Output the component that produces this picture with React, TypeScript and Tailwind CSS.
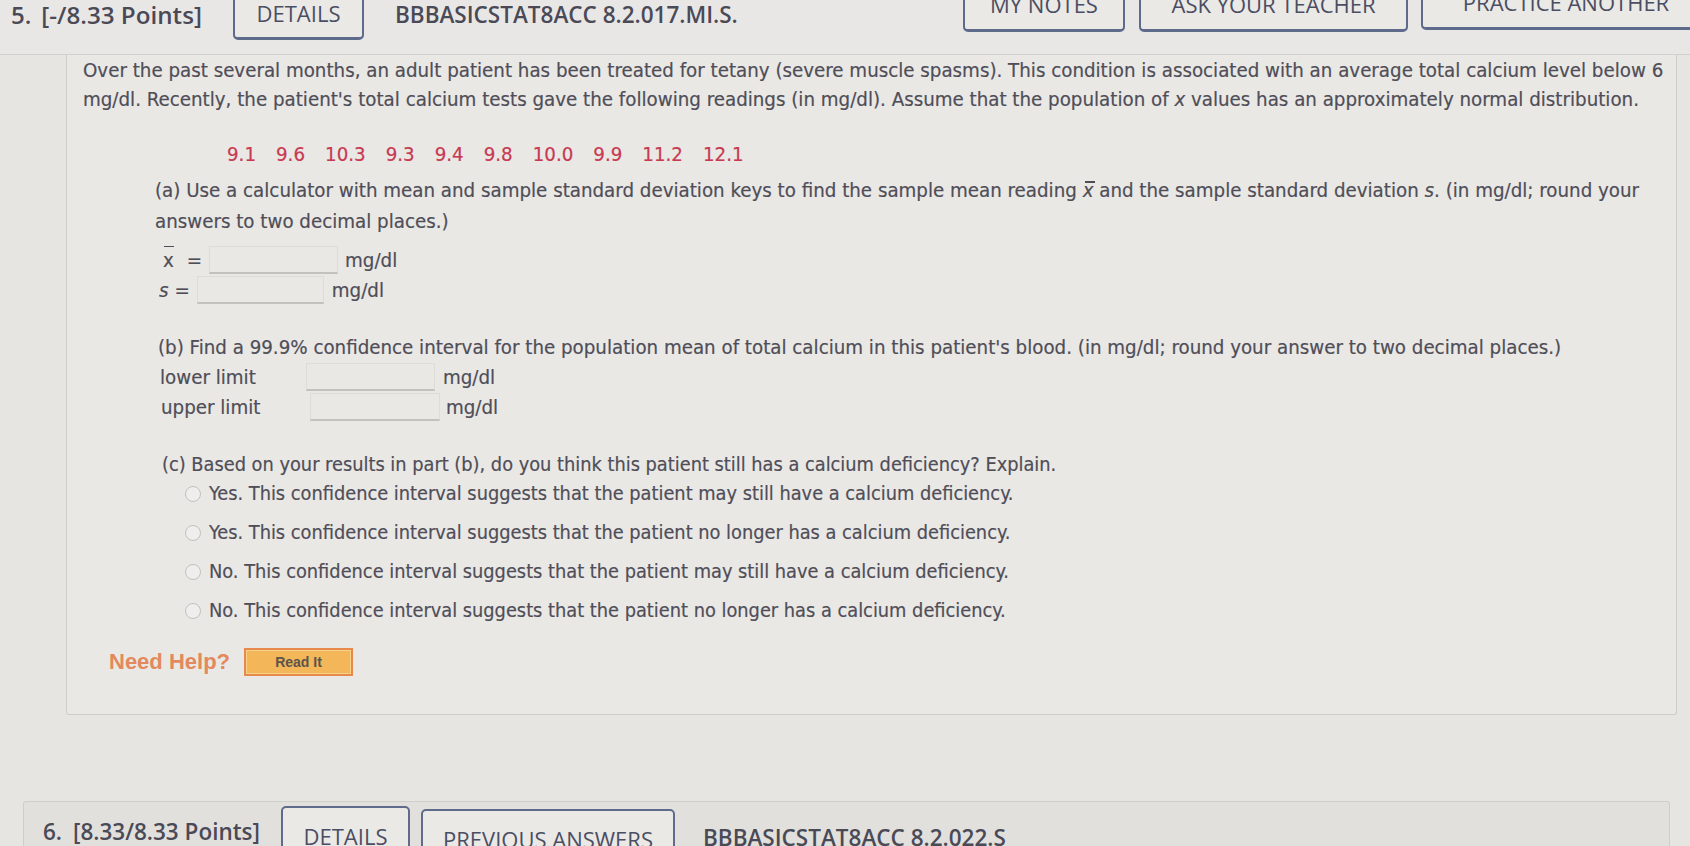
const head = "font-['Open_Sans',sans-serif] font-semibold text-[22.5px] leading-[30px] text-[#4a4a57]";
const body = "font-['DejaVu_Sans_Condensed','DejaVu_Sans',sans-serif] text-[20.3px] text-[#4f4e58] [-webkit-text-stroke:0.2px_#4f4e58]";
const bodyC = "font-['DejaVu_Sans_Condensed','DejaVu_Sans',sans-serif] text-[19.8px] text-[#4f4e58] [-webkit-text-stroke:0.2px_#4f4e58]";

function TabButton({ label, className }: { label: string; className: string }) {
  return (
    <div
      className={`flex shrink-0 items-center justify-center rounded-b-[5px] border-2 border-b-[3px] border-[#5f6b8a] bg-[#ebe9e6] ${className}`}
    >
      <span className="font-['Open_Sans',sans-serif] text-[22px] leading-[30px] text-[#4a4e63]">{label}</span>
    </div>
  );
}

function Blank({ className }: { className: string }) {
  return (
    <span
      className={`inline-block h-[28px] shrink-0 border border-[#dedcd9] border-b-[2px] border-b-[#c3c1be] bg-[#eae8e5] ${className}`}
    />
  );
}

function Radio({ text }: { text: string }) {
  return (
    <div className="ml-[102px] flex h-[30px] items-center">
      <span className="h-[16px] w-[16px] shrink-0 rounded-full border-[1.5px] border-[#c2c1bf] bg-[#efeeec]" />
      <span className={`${bodyC} ml-[8px] whitespace-nowrap`}>{text}</span>
    </div>
  );
}

const readings = ["9.1", "9.6", "10.3", "9.3", "9.4", "9.8", "10.0", "9.9", "11.2", "12.1"];

export default function App() {
  return (
    <div className="h-[846px] w-[1690px] overflow-hidden bg-[#e7e5e2]">
      {/* question 5 header */}
      <div className="flex h-[55px] items-start overflow-hidden border-b border-[#d2d0cd] bg-[#e9e7e5]">
        <div className="flex h-[30px] w-[233px] shrink-0 items-center pl-[11px]">
          <span className={`${head} text-[24px]`}>5.</span>
          <span className={`${head} ml-[10px] text-[24.2px]`}>[-/8.33 Points]</span>
        </div>
        <TabButton label="DETAILS" className="-mt-[14px] h-[54px] w-[131px]" />
        <div className="flex h-[30px] w-[599px] shrink-0 items-center pl-[31px]">
          <span className={head}>BBBASICSTAT8ACC 8.2.017.MI.S.</span>
        </div>
        <TabButton label="MY NOTES" className="-mt-[24px] h-[56px] w-[162px]" />
        <TabButton label="ASK YOUR TEACHER" className="-mt-[24px] ml-[14px] h-[56px] w-[269px]" />
        <TabButton label="PRACTICE ANOTHER" className="-mt-[26px] ml-[13px] h-[56px] w-[290px]" />
      </div>

      {/* question 5 body */}
      <div className="ml-[66px] flex h-[660px] w-[1611px] flex-col rounded-b-[3px] border border-t-0 border-[#cfcdca] bg-[#eae8e5] pl-[16px]">
        <p className={`${body} mt-[1px] whitespace-nowrap leading-[29px]`}>
          Over the past several months, an adult patient has been treated for tetany (severe muscle spasms). This condition is associated with an average total calcium level below 6
          <br />
          mg/dl. Recently, the patient's total calcium tests gave the following readings (in mg/dl). Assume that the population of <i>x</i> values has an approximately normal distribution.
        </p>

        <div className="ml-[144px] mt-[25px] flex h-[30px] items-center gap-[20px]">
          {readings.map((r, i) => (
            <span key={i} className={`${body} text-[#c73a52] [-webkit-text-stroke:0.2px_#c73a52]`}>
              {r}
            </span>
          ))}
        </div>

        <p className={`${body} ml-[72px] mt-[6px] whitespace-nowrap leading-[31px]`}>
          (a) Use a calculator with mean and sample standard deviation keys to find the sample mean reading{" "}
          <span className="relative italic">
            x<span className="absolute left-[2px] top-[3px] h-[1.5px] w-[10px] bg-[#4f4e58]" />
          </span>{" "}
          and the sample standard deviation <i>s</i>. (in mg/dl; round your
          <br />
          answers to two decimal places.)
        </p>

        <div className="ml-[80px] mt-[8px] flex h-[30px] items-center">
          <span className={`${body} relative text-[18px]`}>
            x<span className="absolute left-[1px] top-[1px] h-[1.5px] w-[10px] bg-[#4f4e58]" />
          </span>
          <span className={`${body} ml-[13px] text-[16px]`}>=</span>
          <Blank className="ml-[7px] w-[129px]" />
          <span className={`${body} ml-[7px]`}>mg/dl</span>
        </div>
        <div className="ml-[76px] flex h-[30px] items-center">
          <span className={`${body} text-[17px] italic`}>s</span>
          <span className={`${body} ml-[6px] text-[16px]`}>=</span>
          <Blank className="ml-[7px] w-[127px]" />
          <span className={`${body} ml-[8px]`}>mg/dl</span>
        </div>

        <p className={`${body} ml-[75px] mt-[28px] h-[29px] whitespace-nowrap leading-[29px]`}>
          (b) Find a 99.9% confidence interval for the population mean of total calcium in this patient's blood. (in mg/dl; round your answer to two decimal places.)
        </p>
        <div className="ml-[77px] flex h-[30px] items-center">
          <span className={`${body} w-[146px] shrink-0`}>lower limit</span>
          <Blank className="w-[129px]" />
          <span className={`${body} ml-[8px]`}>mg/dl</span>
        </div>
        <div className="ml-[78px] flex h-[30px] items-center">
          <span className={`${body} w-[149px] shrink-0`}>upper limit</span>
          <Blank className="w-[130px]" />
          <span className={`${body} ml-[6px]`}>mg/dl</span>
        </div>

        <p className={`${bodyC} ml-[79px] mt-[29px] h-[28px] whitespace-nowrap leading-[28px]`}>
          (c) Based on your results in part (b), do you think this patient still has a calcium deficiency? Explain.
        </p>
        <div className="flex flex-col gap-[9px]">
          <Radio text="Yes. This confidence interval suggests that the patient may still have a calcium deficiency." />
          <Radio text="Yes. This confidence interval suggests that the patient no longer has a calcium deficiency." />
          <Radio text="No. This confidence interval suggests that the patient may still have a calcium deficiency." />
          <Radio text="No. This confidence interval suggests that the patient no longer has a calcium deficiency." />
        </div>

        <div className="ml-[26px] mt-[20px] flex h-[30px] items-center">
          <span className="font-['Liberation_Sans',Arial,sans-serif] text-[22px] font-bold text-[#e2895e]">
            Need Help?
          </span>
          <button className="ml-[14px] mt-[2px] flex h-[28px] w-[109px] items-center justify-center border-2 border-[#e8894c] bg-[#f3b658] shadow-[inset_0_0_0_1px_#f7d08a]">
            <span className="font-['Liberation_Sans',Arial,sans-serif] text-[14px] font-bold text-[#5d544b]">Read It</span>
          </button>
        </div>
      </div>

      {/* question 6 header */}
      <div className="ml-[23px] mt-[86px] flex h-[60px] w-[1647px] items-start overflow-hidden rounded-t-[3px] border border-b-0 border-[#d0cecb] bg-[#e2e0dd]">
        <div className="mt-[15px] flex h-[30px] w-[257px] shrink-0 items-center pl-[19px]">
          <span className={head}>6.</span>
          <span className={`${head} ml-[11px] text-[21.4px]`}>[8.33/8.33 Points]</span>
        </div>
        <TabButton label="DETAILS" className="mt-[4px] h-[60px] w-[129px] rounded-t-[5px] rounded-b-none border-b-0" />
        <TabButton label="PREVIOUS ANSWERS" className="ml-[11px] mt-[7px] h-[60px] w-[254px] rounded-t-[5px] rounded-b-none border-b-0" />
        <div className="ml-[28px] mt-[21px] flex h-[30px] items-center">
          <span className={head}>BBBASICSTAT8ACC 8.2.022.S</span>
        </div>
      </div>
    </div>
  );
}
